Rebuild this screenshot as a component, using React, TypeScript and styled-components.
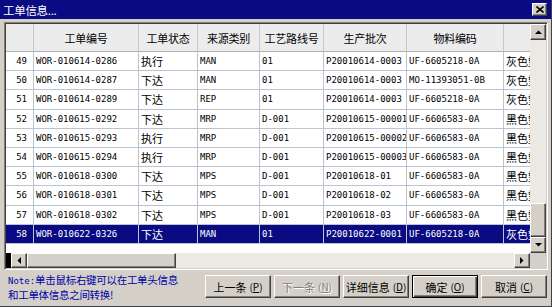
import React from 'react'
import styled, { createGlobalStyle, css } from 'styled-components'

const FACE = '#d4d0c8'
const NAVY = '#0a0a82'
const GRID = '#bcc3d2'

const GlobalStyle = createGlobalStyle`
  html, body {
    margin: 0;
    padding: 0;
    background: ${FACE};
  }
  body {
    font-family: "Noto Sans CJK SC", "Liberation Sans", sans-serif;
  }
`

const raised = css`
  border: 1px solid;
  border-color: #fff #404040 #404040 #fff;
  box-shadow: inset -1px -1px #808080;
  background: ${FACE};
  box-sizing: border-box;
`

const Window = styled.div`
  width: 552px;
  height: 307px;
  background: ${FACE};
  display: flex;
  flex-direction: column;
  overflow: hidden;
  box-sizing: border-box;
  border-right: 1px solid #404040;
  border-bottom: 1px solid #404040;
`

const TitleBar = styled.div`
  height: 19px;
  flex: none;
  display: flex;
  align-items: center;
  justify-content: space-between;
  padding: 0 4px 0 3px;
  background: ${NAVY};
  color: #fff;
  font-size: 11.5px;
  letter-spacing: -0.3px;
`

const CloseButton = styled.div`
  ${raised};
  width: 15px;
  height: 13px;
  display: flex;
  align-items: center;
  justify-content: center;
`

const Body = styled.div`
  flex: 1;
  display: flex;
  flex-direction: column;
  padding: 3px 3px 0 4px;
`

const Frame = styled.div`
  height: 248px;
  flex: none;
  box-sizing: border-box;
  border: 1px solid;
  border-color: #808080 #fff #fff #808080;
  padding: 1px;
  box-shadow: inset 1px 1px #404040, inset -1px -1px ${FACE};
  display: grid;
  grid-template-columns: 1fr 16px;
  grid-template-rows: 1fr 15px;
`

const Viewport = styled.div`
  background: #fff;
  overflow: hidden;
  min-width: 0;
`

// last column is wider than what shows, so its header text sits off screen
const COLS = '28px 105px 59px 62px 64px 83px 97px 130px'

const HeaderRow = styled.div`
  display: grid;
  grid-template-columns: ${COLS};
  height: 28px;
  background: #ececec;
`

const HeaderCell = styled.div`
  display: flex;
  align-items: center;
  justify-content: center;
  border-right: 1px solid #c8c8c8;
  border-bottom: 1px solid #b0b0b0;
  font-size: 11px;
  color: #000;
  white-space: nowrap;
  overflow: hidden;
  letter-spacing: -0.2px;
`

const Row = styled.div<{ $selected?: boolean }>`
  display: grid;
  grid-template-columns: ${COLS};
  height: 19.2px;
  background: ${(p) => (p.$selected ? NAVY : '#fff')};
  color: ${(p) => (p.$selected ? '#fff' : '#000')};
`

const Cell = styled.div<{ $cjk?: boolean; $num?: boolean }>`
  display: flex;
  align-items: center;
  justify-content: ${(p) => (p.$num ? 'flex-end' : 'flex-start')};
  box-sizing: border-box;
  padding: ${(p) => (p.$num ? '0 6px 0 0' : '0 0 0 2px')};
  border-right: 1px solid ${GRID};
  border-bottom: 1px solid ${GRID};
  white-space: nowrap;
  overflow: hidden;
  ${(p) =>
    p.$cjk
      ? css`
          font-family: "Noto Sans CJK SC", sans-serif;
          font-size: 11px;
        `
      : css`
          font-family: "DejaVu Sans Mono", "Liberation Mono", monospace;
          font-size: 9px;
        `}
`

const VScroll = styled.div`
  display: flex;
  flex-direction: column;
  background: #ebe9e4;
`

const HScroll = styled.div`
  display: flex;
  background: #ebe9e4;
`

const ArrowButton = styled.div<{ $w?: number; $h?: number }>`
  ${raised};
  flex: none;
  width: ${(p) => p.$w ?? 16}px;
  height: ${(p) => p.$h ?? 16}px;
  display: flex;
  align-items: center;
  justify-content: center;
`

const Thumb = styled.div<{ $w?: number; $h?: number }>`
  ${raised};
  flex: none;
  width: ${(p) => (p.$w ? `${p.$w}px` : '100%')};
  height: ${(p) => (p.$h ? `${p.$h}px` : '100%')};
`

const Spacer = styled.div`
  flex: 1;
`

const BlackStub = styled.div`
  width: 5px;
  flex: none;
  background: #000;
`

const Corner = styled.div`
  background: ${FACE};
`

const Bottom = styled.div`
  flex: 1;
  display: flex;
  justify-content: space-between;
  align-items: flex-start;
  padding: 3px 1px 0 4px;
`

const Note = styled.div`
  color: #0000a8;
  font-size: 10.5px;
  line-height: 13px;
  letter-spacing: -0.3px;
  white-space: nowrap;
`

const NoteLabel = styled.span`
  font-family: "DejaVu Sans Mono", "Liberation Mono", monospace;
  font-size: 9px;
  letter-spacing: 0;
`

const Buttons = styled.div`
  display: flex;
  gap: 3px;
  margin-top: 2px;
`

const Button = styled.div<{ $default?: boolean; $disabled?: boolean }>`
  ${raised};
  width: 66px;
  height: 23px;
  display: flex;
  align-items: center;
  justify-content: center;
  font-size: 11px;
  color: ${(p) => (p.$disabled ? '#808080' : '#000')};
  text-shadow: ${(p) => (p.$disabled ? '1px 1px #fff' : 'none')};
  white-space: nowrap;
  ${(p) =>
    p.$default &&
    css`
      border: 1px solid #000;
      box-shadow: inset 1px 1px #fff, inset -1px -1px #404040, inset -2px -2px #808080;
    `}
`

const Key = styled.span`
  font-size: 10px;
  margin-left: 3px;
`

const Arrow = ({ dir }: { dir: 'up' | 'down' | 'left' | 'right' }) => {
  const pts = {
    up: '0,4 7,4 3.5,0.5',
    down: '0,0 7,0 3.5,3.5',
    left: '4,0 4,7 0.5,3.5',
    right: '0,0 0,7 3.5,3.5',
  }[dir]
  const vertical = dir === 'up' || dir === 'down'
  return (
    <svg width={vertical ? 7 : 4} height={vertical ? 4 : 7} viewBox={vertical ? '0 0 7 4' : '0 0 4 7'}>
      <polygon points={pts} fill="#000" />
    </svg>
  )
}

const headers = ['', '工单编号', '工单状态', '来源类别', '工艺路线号', '生产批次', '物料编码', '物料名称']

const rows = [
  ['49', 'WOR-010614-0286', '执行', 'MAN', '01', 'P20010614-0003', 'UF-6605218-0A', '灰色塑料'],
  ['50', 'WOR-010614-0287', '下达', 'MAN', '01', 'P20010614-0003', 'MO-11393051-0B', '灰色塑料'],
  ['51', 'WOR-010614-0289', '下达', 'REP', '01', 'P20010614-0003', 'UF-6605218-0A', '灰色塑料'],
  ['52', 'WOR-010615-0292', '下达', 'MRP', 'D-001', 'P20010615-00001', 'UF-6606583-0A', '黑色塑料'],
  ['53', 'WOR-010615-0293', '执行', 'MRP', 'D-001', 'P20010615-00002', 'UF-6606583-0A', '黑色塑料'],
  ['54', 'WOR-010615-0294', '执行', 'MRP', 'D-001', 'P20010615-00003', 'UF-6606583-0A', '黑色塑料'],
  ['55', 'WOR-010618-0300', '下达', 'MPS', 'D-001', 'P20010618-01', 'UF-6606583-0A', '黑色塑料'],
  ['56', 'WOR-010618-0301', '下达', 'MPS', 'D-001', 'P20010618-02', 'UF-6606583-0A', '黑色塑料'],
  ['57', 'WOR-010618-0302', '下达', 'MPS', 'D-001', 'P20010618-03', 'UF-6606583-0A', '黑色塑料'],
  ['58', 'WOR-010622-0326', '下达', 'MAN', '01', 'P20010622-0001', 'UF-6605218-0A', '灰色塑料'],
]

const SELECTED = '58'

export default function App() {
  return (
    <>
      <GlobalStyle />
      <Window>
        <TitleBar>
          <span>工单信息...</span>
          <CloseButton>
            <svg width="8" height="7" viewBox="0 0 8 7">
              <path d="M0.5 0.5 L7.5 6.5 M7.5 0.5 L0.5 6.5" stroke="#000" strokeWidth="1.6" />
            </svg>
          </CloseButton>
        </TitleBar>
        <Body>
          <Frame>
            <Viewport>
              <HeaderRow>
                {headers.map((h, i) => (
                  <HeaderCell key={i}>{h}</HeaderCell>
                ))}
              </HeaderRow>
              {rows.map((r) => (
                <Row key={r[0]} $selected={r[0] === SELECTED}>
                  {r.map((v, i) => (
                    <Cell key={i} $num={i === 0} $cjk={i === 2 || i === 7}>
                      {v}
                    </Cell>
                  ))}
                </Row>
              ))}
            </Viewport>
            <VScroll>
              <ArrowButton>
                <Arrow dir="up" />
              </ArrowButton>
              <Spacer />
              <Thumb $h={34} />
              <ArrowButton>
                <Arrow dir="down" />
              </ArrowButton>
            </VScroll>
            <HScroll>
              <BlackStub />
              <ArrowButton $h={15}>
                <Arrow dir="left" />
              </ArrowButton>
              <Thumb $w={149} />
              <Spacer />
              <ArrowButton $h={15}>
                <Arrow dir="right" />
              </ArrowButton>
            </HScroll>
            <Corner />
          </Frame>
          <Bottom>
            <Note>
              <NoteLabel>Note:</NoteLabel>单击鼠标右键可以在工单头信息
              <br />
              和工单体信息之间转换!
            </Note>
            <Buttons>
              <Button>
                上一条<Key>(<u>P</u>)</Key>
              </Button>
              <Button $disabled>
                下一条<Key>(<u>N</u>)</Key>
              </Button>
              <Button>
                详细信息<Key>(<u>D</u>)</Key>
              </Button>
              <Button $default>
                确定<Key>(<u>O</u>)</Key>
              </Button>
              <Button>
                取消<Key>(<u>C</u>)</Key>
              </Button>
            </Buttons>
          </Bottom>
        </Body>
      </Window>
    </>
  )
}
